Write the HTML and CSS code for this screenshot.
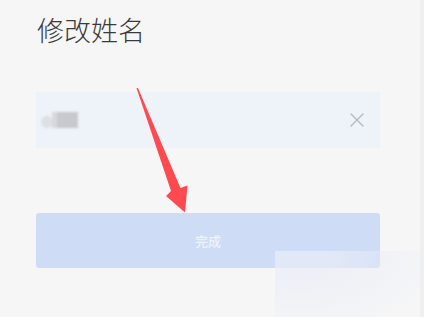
FILE: index.html
```html
<!DOCTYPE html>
<html lang="zh-CN">
<head>
  <meta charset="UTF-8" />
  <title>修改姓名</title>
  <link rel="stylesheet" href="styles.css">
</head>
<body>
  <div class="page">
    <h1 class="title">修改姓名</h1>

    <div class="name-input">
      <div class="blurred-name">
        <span class="blob-round"></span>
        <span class="blob-mid"></span>
        <span class="blob-rect"></span>
      </div>
      <svg class="clear-icon" width="14" height="14" viewBox="0 0 14 14">
        <path d="M1 1 L13 13 M13 1 L1 13" stroke="#b4b7bd" stroke-width="1.3" fill="none" stroke-linecap="round" />
      </svg>
    </div>

    <button class="done-btn">完成</button>

    <svg class="arrow" width="424" height="317" viewBox="0 0 424 317">
      <polygon points="136.5,88 138,88 180.5,188 187.5,185.5 185,212.5 166,196 171,191" fill="#ff4b4f" />
    </svg>
    <div class="watermark"></div>
  </div>
</body>
</html>
```

FILE: styles.css
```css
body {
  margin: 0;
  background: linear-gradient(to right, #f6f6f6 420px, #efefef 420px);
  font-family: 'Noto Sans CJK SC', 'Noto Sans', sans-serif;
}
.page {
  position: relative;
  height: 317px;
  padding: 11px 44px 0 36px;
  box-sizing: border-box;
  overflow: hidden;
}
.title {
  margin: 0 0 0 1px;
  font-size: 27px;
  line-height: 37px;
  font-weight: 300;
  color: #3a3a3a;
}
.name-input {
  margin-top: 44px;
  height: 56px;
  background: #eef2f9;
  display: flex;
  align-items: center;
  justify-content: space-between;
  padding: 0 16px 0 5px;
}
.blurred-name {
  display: flex;
  align-items: center;
  filter: blur(0.8px);
}
.blob-round {
  width: 12px;
  height: 12px;
  border-radius: 6px;
  background: #dcdfe4;
  margin-top: 4px;
}
.blob-mid {
  width: 5px;
  height: 16px;
  background: #d6d8dd;
  margin-left: -1px;
}
.blob-rect {
  width: 21px;
  height: 16px;
  background: #c7c9ce;
}
.done-btn {
  display: block;
  width: 100%;
  height: 55px;
  margin-top: 65px;
  border: none;
  border-radius: 3px;
  background: #cfdcf6;
  color: #eef3fc;
  font-family: 'Noto Sans CJK SC', 'Noto Sans', sans-serif;
  font-size: 13px;
  font-weight: 500;
}
.arrow {
  position: absolute;
  left: 0;
  top: 0;
}
.watermark {
  position: absolute;
  left: 275px;
  top: 251px;
  width: 149px;
  height: 66px;
  background: radial-gradient(ellipse 120% 140% at 15% 10%, rgba(233, 237, 246, 0.7) 20%, rgba(240, 242, 247, 0) 85%);
}
```
